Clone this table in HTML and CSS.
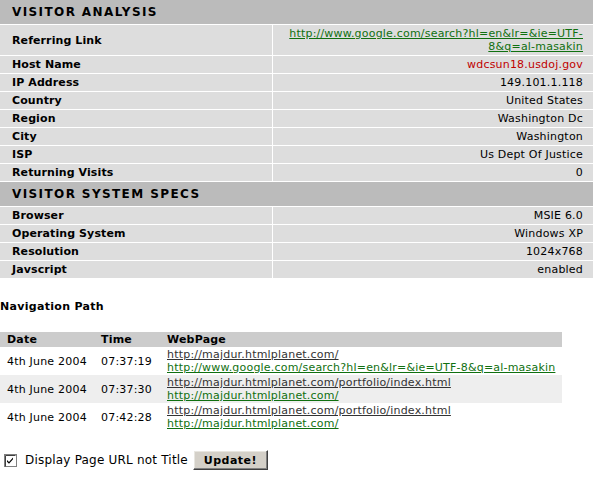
FILE: index.html
```html
<!DOCTYPE html>
<html>
<head>
<meta charset="utf-8">
<title>Visitor Analysis</title>
<link rel="stylesheet" href="styles.css">
</head>
<body>
<table class="info">
  <colgroup><col class="c1"><col class="c2"></colgroup>
  <tr><th colspan="2" class="sec">VISITOR ANALYSIS</th></tr>
  <tr class="tall"><td class="lbl">Referring Link</td><td class="val"><a class="glink" href="#">http://www.google.com/search?hl=en&amp;lr=&amp;ie=UTF-<br>8&amp;q=al-masakin</a></td></tr>
  <tr><td class="lbl">Host Name</td><td class="val red">wdcsun18.usdoj.gov</td></tr>
  <tr><td class="lbl">IP Address</td><td class="val">149.101.1.118</td></tr>
  <tr><td class="lbl">Country</td><td class="val">United States</td></tr>
  <tr><td class="lbl">Region</td><td class="val">Washington Dc</td></tr>
  <tr><td class="lbl">City</td><td class="val">Washington</td></tr>
  <tr><td class="lbl">ISP</td><td class="val">Us Dept Of Justice</td></tr>
  <tr><td class="lbl">Returning Visits</td><td class="val">0</td></tr>
  <tr><th colspan="2" class="sec">VISITOR SYSTEM SPECS</th></tr>
  <tr><td class="lbl">Browser</td><td class="val">MSIE 6.0</td></tr>
  <tr><td class="lbl">Operating System</td><td class="val">Windows XP</td></tr>
  <tr><td class="lbl">Resolution</td><td class="val">1024x768</td></tr>
  <tr><td class="lbl last">Javscript</td><td class="val last">enabled</td></tr>
</table>

<h2 class="navtitle">Navigation Path</h2>

<table class="nav">
  <colgroup><col class="n1"><col class="n2"><col class="n3"></colgroup>
  <tr><th>Date</th><th>Time</th><th>WebPage</th></tr>
  <tr>
    <td>4th June 2004</td><td>07:37:19</td>
    <td><a class="dlink" href="#">http://majdur.htmlplanet.com/</a><br><a class="glink" href="#">http://www.google.com/search?hl=en&amp;lr=&amp;ie=UTF-8&amp;q=al-masakin</a></td>
  </tr>
  <tr class="alt">
    <td>4th June 2004</td><td>07:37:30</td>
    <td><a class="dlink" href="#">http://majdur.htmlplanet.com/portfolio/index.html</a><br><a class="glink" href="#">http://majdur.htmlplanet.com/</a></td>
  </tr>
  <tr>
    <td>4th June 2004</td><td>07:42:28</td>
    <td><a class="dlink" href="#">http://majdur.htmlplanet.com/portfolio/index.html</a><br><a class="glink" href="#">http://majdur.htmlplanet.com/</a></td>
  </tr>
</table>

<div class="opts">
  <label class="chk">
    <span class="box"><svg width="13" height="13" viewBox="0 0 13 13"><rect x="0.5" y="0.5" width="12" height="12" fill="#fff" stroke="#808080"/><path d="M1.5 12.5V1.5H11.5" fill="none" stroke="#404040"/><path d="M3 6l2 2 4-4.5v1.8L5 9.8 3 7.8z" fill="#000"/></svg></span>
    <span class="chktext">Display Page URL not Title</span>
  </label>
  <button class="btn" type="button">Update!</button>
</div>
</body>
</html>
```

FILE: styles.css
```css
html, body {
  margin: 0;
  padding: 0;
  background: #fff;
}
body {
  font-family: "DejaVu Sans", Verdana, sans-serif;
  font-size: 11px;
  letter-spacing: 0.2px;
  color: #000;
}
a {
  text-decoration: underline;
}
.glink {
  color: #107010;
}
.dlink {
  color: #333;
}
.info {
  width: 593px;
  border-spacing: 0;
  table-layout: fixed;
}
.c1 { width: 273px; }
.c2 { width: 320px; }
.sec {
  background: #bbbbbb;
  height: 24px;
  padding: 0 0 0 12px;
  text-align: left;
  font-size: 12px;
  font-weight: bold;
  letter-spacing: 1.4px;
  border-bottom: 1px solid #fff;
  vertical-align: middle;
}
.info td {
  background: #dddddd;
  height: 17px;
  padding: 0;
  border-bottom: 1px solid #fff;
  vertical-align: middle;
  line-height: 13px;
}
.info .tall td {
  height: 30px;
}
.info td.lbl {
  font-weight: bold;
  font-size: 11px;
  letter-spacing: 0.1px;
  padding-left: 12px;
  border-right: 1px solid #fff;
}
.info td.val {
  text-align: right;
  padding-right: 10px;
}
.red {
  color: #c00000;
}
.navtitle {
  font-size: 11px;
  font-weight: bold;
  letter-spacing: 0.3px;
  margin: 21px 0 0 0;
  line-height: 13px;
}
.nav {
  margin-top: 19px;
  width: 562px;
  border-spacing: 0;
  table-layout: fixed;
}
.n1 { width: 93px; }
.n2 { width: 66px; }
.n3 { width: 403px; }
.nav th {
  background: #cccccc;
  height: 15px;
  padding: 0 0 0 8px;
  text-align: left;
  font-weight: bold;
  font-size: 11px;
  line-height: 13px;
}
.nav td {
  padding: 1px 0 1px 8px;
  line-height: 13px;
  vertical-align: middle;
  white-space: nowrap;
}
.nav th:first-child, .nav td:first-child {
  padding-left: 7px;
}
.nav .alt td {
  background: #eeeeee;
}
.opts {
  display: flex;
  align-items: center;
  margin-top: 19px;
  padding-left: 4px;
}
.chk {
  display: flex;
  align-items: center;
}
.box {
  display: block;
  width: 13px;
  height: 13px;
}
.box svg {
  display: block;
}
.chktext {
  font-size: 12px;
  margin-left: 8px;
}
.btn {
  margin-left: 5px;
  width: 75px;
  height: 20px;
  padding: 0;
  font-family: "DejaVu Sans", Verdana, sans-serif;
  font-size: 11px;
  font-weight: bold;
  letter-spacing: 0.5px;
  color: #000;
  background: #d4d0c8;
  border: 1px solid;
  border-color: #fff #404040 #404040 #fff;
  box-shadow: inset -1px -1px 0 #808080, inset 1px 1px 0 #e8e6e0;
}
```
